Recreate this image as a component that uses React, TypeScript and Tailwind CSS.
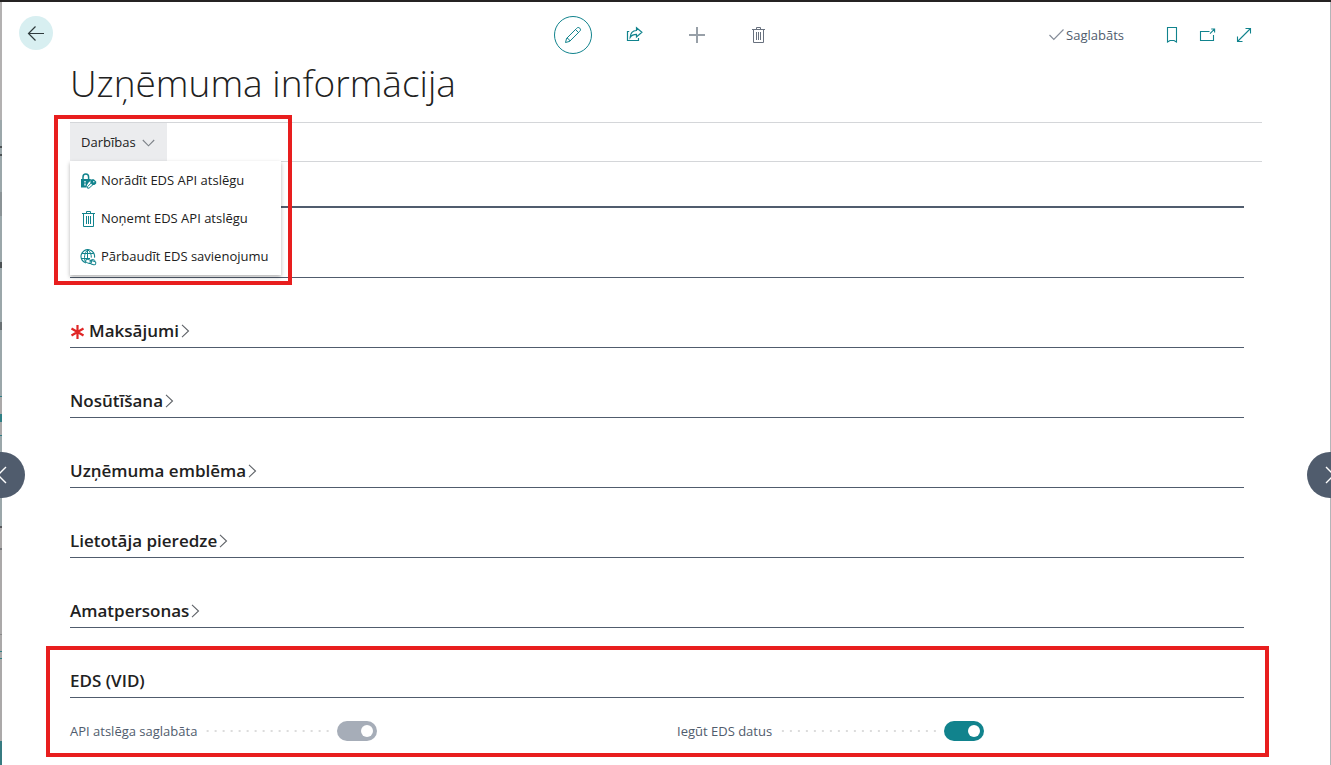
import { useState } from 'react';
import type { ReactNode } from 'react';

function BackIcon() {
  return (
    <svg width="18" height="18" viewBox="0 0 18 18" fill="none" stroke="#2f3a3c" strokeWidth="1.2">
      <path d="M17 9.5H1.5M8.5 2.5L1.5 9.5L8.5 16.5" />
    </svg>
  );
}

function PencilIcon() {
  return (
    <svg width="18" height="18" viewBox="0 0 18 18" fill="none" stroke="currentColor">
      <path d="M1.5 16.5L2.6 12.4L12.6 2.4C13.4 1.3 14.8 1.2 15.8 2.2C16.8 3.2 16.7 4.6 15.6 5.4L5.6 15.4Z" />
      <path d="M11.5 3.5L14.5 6.5M2.6 12.4C4.4 12.3 5.6 13.6 5.6 15.4" />
    </svg>
  );
}

function ShareIcon() {
  return (
    <svg width="18" height="18" viewBox="0 0 18 18" fill="none" stroke="currentColor" strokeWidth="1.2">
      <path d="M3.2 5.5H1.5V14.5H12.5V12" />
      <path d="M10.5 1.8L15.9 6.3L10.5 11V8.4C7.6 8.4 5.6 9.2 4.2 11.4C4.4 7.4 6.6 4.7 10.5 4.5Z" />
    </svg>
  );
}

function PlusIcon() {
  return (
    <svg width="18" height="18" viewBox="0 0 18 18" fill="none" stroke="#98a0a8" strokeWidth="2">
      <path d="M1 9H17M9 1V17" />
    </svg>
  );
}

function TrashIcon() {
  return (
    <svg width="16" height="16" viewBox="0 0 16 16" fill="none" stroke="currentColor">
      <path d="M1 2.5H14M5.5 2.5V0.5H9.5V2.5M2.5 2.5V15.5H12.5V2.5M5.5 5V13M7.5 5V13M9.5 5V13" />
    </svg>
  );
}

function CheckIcon() {
  return (
    <svg width="15" height="12" viewBox="0 0 15 12" fill="none" stroke="#858c98" strokeWidth="1.2">
      <path d="M0.5 6L4.8 10.3L14.5 0.5" />
    </svg>
  );
}

function BookmarkIcon() {
  return (
    <svg width="12" height="18" viewBox="0 0 12 18" fill="none" stroke="currentColor" strokeWidth="1.1">
      <path d="M1.5 1.5H10.5V16L8 14.5H4L1.5 16Z" />
    </svg>
  );
}

function PopOutIcon() {
  return (
    <svg width="18" height="16" viewBox="0 0 18 16" fill="none" stroke="currentColor" strokeWidth="1.1">
      <path d="M10.5 4.5H1.5V13.5H14.5V8M11 6.6L15.5 2.1M12.2 2H15.6V5.4" />
    </svg>
  );
}

function ExpandIcon() {
  return (
    <svg width="16" height="16" viewBox="0 0 16 16" fill="none" stroke="currentColor" strokeWidth="1.1">
      <path d="M1.5 14.5L14.5 1.5M9.5 1.5H14.5V6.5M1.5 9.5V14.5H6.5" />
    </svg>
  );
}

function LockKeyIcon() {
  return (
    <svg width="17" height="16" viewBox="0 0 17 16" fill="none" stroke="currentColor">
      <path d="M3 6V4C3 2.2 4.1 1.1 5.8 1.1S8.6 2.2 8.6 4V6" strokeWidth="1.5" />
      <path d="M1 6H10.8V7.4L8.4 9.8L6.8 12.6V14.6H1Z" fill="currentColor" stroke="none" />
      <path d="M5 8V9.6M5 10.4V12.4" stroke="#fff" strokeWidth="1.3" />
      <path d="M11.6 6.2H13.8L16.2 8.4V10.4L14.4 12H12.4L10.4 9.8V7.6Z" fill="currentColor" stroke="none" />
      <path d="M11.4 9.8L7.6 13.6V15.2H9L13 11.6" />
      <circle cx="13.8" cy="8.8" r="0.7" fill="#fff" stroke="none" />
    </svg>
  );
}

function GlobeLinkIcon() {
  return (
    <svg width="17" height="17" viewBox="0 0 17 17" fill="none" stroke="currentColor">
      <path d="M6 14A6.8 6.8 0 1 1 14.5 8.6" strokeWidth="1.1" />
      <path d="M5.4 13C3.8 9.6 4.2 3.6 7.8 0.8C10.4 2.8 11.4 5.6 11.3 8.6M7.5 1V9.5M1.8 4.5H13.6M1 9.5H10" />
      <rect x="5.6" y="10.7" width="6" height="3.4" rx="1.7" transform="rotate(18 8.6 12.4)" />
      <rect x="9.9" y="12" width="6" height="3.4" rx="1.7" transform="rotate(18 12.9 13.7)" />
      <path d="M10.8 11.2C12 10.2 14 10.4 15.4 12" />
    </svg>
  );
}

function ChevronRight() {
  return (
    <svg width="9" height="14" viewBox="0 0 9 14" fill="none" stroke="#5f6368" strokeWidth="1.1">
      <path d="M1 0.8L7.5 7L1 13.2" />
    </svg>
  );
}

function ChevronDown() {
  return (
    <svg width="13" height="8" viewBox="0 0 13 8" fill="none" stroke="#7d8288" strokeWidth="1.1">
      <path d="M0.8 1L6.5 6.8L12.2 1" />
    </svg>
  );
}

function RequiredMark() {
  return (
    <svg className="mr-0.5" width="15" height="15" viewBox="0 0 15 15" fill="none" stroke="#e02626" strokeWidth="2.2">
      <path d="M7.5 1V15M1.5 4.5L13.5 11.5M13.5 4.5L1.5 11.5" />
    </svg>
  );
}

function IconButton({ label, children, className }: { label: string; children: ReactNode; className: string }) {
  return (
    <button type="button" aria-label={label} className={`flex items-center justify-center ${className}`}>
      {children}
    </button>
  );
}

function Section({ title, required = false }: { title: string; required?: boolean }) {
  return (
    <h2 className="flex h-[70px] items-end border-b border-[#505c6d] pb-1">
      <button type="button" className="flex items-center gap-0.5 text-[17px] leading-6 font-semibold">
        {required && <RequiredMark />}
        {title}
        <ChevronRight />
      </button>
    </h2>
  );
}

function ToggleField({ id, label, disabled = false }: { id: string; label: string; disabled?: boolean }) {
  const [on, setOn] = useState(true);
  return (
    <div className="flex h-5 items-center">
      <div className="flex w-[267px] items-center pr-2">
        <label htmlFor={id} className="text-[13px] leading-5 whitespace-nowrap text-[#505c6d]">
          {label}
        </label>
        <span className="ml-2 h-0.5 flex-1 bg-[linear-gradient(to_left,#dcdcdc_2px,transparent_2px)] bg-[length:8px_2px] bg-right" />
      </div>
      <input
        id={id}
        type="checkbox"
        role="switch"
        checked={on}
        disabled={disabled}
        onChange={() => setOn(!on)}
        className="flex h-5 w-10 appearance-none items-center rounded-full bg-[#505c6d] px-1 before:size-3 before:rounded-full before:bg-white checked:justify-end checked:bg-[#11838d] disabled:bg-[#a6adb8]"
      />
    </div>
  );
}

const backdrop = [
  'h-[118px] bg-[#b3b1b1]',
  'h-[26px] bg-[#9ba7aa]',
  'h-[2px] bg-[#4c5254]',
  'h-[6px] bg-[#9ba7aa]',
  'h-[2px] bg-[#4c5254]',
  'h-[36px] bg-[#9ba7aa]',
  'h-[24px] bg-[#8b9396]',
  'h-[46px] bg-[#9ba7aa]',
  'h-[6px] bg-[#4c5254]',
  'h-[54px] bg-[#9ba7aa]',
  'h-[8px] bg-[#6a7174]',
  'h-[66px] bg-[#9ba7aa]',
  'h-[1px] bg-[#2f7f85]',
  'h-[17px] bg-[#aba9a9]',
  'h-[8px] bg-[#2f7f85]',
  'h-[13px] bg-[#aba9a9]',
  'h-[1px] bg-[#2f7f85]',
  'h-[90px] bg-[#9ba7aa]',
  'h-[2px] bg-[#58595d]',
  'h-[20px] bg-[#aba9a9]',
  'h-[2px] bg-[#77787b]',
  'h-[84px] bg-[#aba9a9]',
  'h-[1px] bg-[#8a8a8a]',
  'h-[16px] bg-[#aba9a9]',
  'h-[1px] bg-[#2f7f85]',
  'h-[6px] bg-[#aba9a9]',
  'h-[1px] bg-[#2f7f85]',
  'h-[82px] bg-[#aba9a9]',
  'grow bg-[#377b81]',
];

const actions = [
  { label: 'Norādīt EDS API atslēgu', icon: <LockKeyIcon /> },
  { label: 'Noņemt EDS API atslēgu', icon: <TrashIcon /> },
  { label: 'Pārbaudīt EDS savienojumu', icon: <GlobeLinkIcon /> },
];

export default function App() {
  const [open, setOpen] = useState(true);
  return (
    <div className="relative flex min-h-screen flex-col overflow-hidden border-t-2 border-[#252323] bg-white font-['Open_Sans','Noto_Sans',sans-serif] text-[#212121]">
      <div className="flex grow">
        <div className="flex w-0.5 shrink-0 flex-col" aria-hidden="true">
          {backdrop.map((segment, i) => (
            <div key={i} className={segment} />
          ))}
        </div>

        <div className="min-w-0 grow border-r border-[#b3b5b8]">
          <header className="grid grid-cols-[1fr_auto_1fr] items-start px-[17px] pt-3.5">
            <IconButton label="Atpakaļ" className="size-[34px] rounded-full bg-[#d8eff1]">
              <BackIcon />
            </IconButton>
            <div className="flex items-center gap-6 text-[#11838d]">
              <IconButton label="Rediģēt" className="size-[38px] rounded-full border border-[#11838d]">
                <PencilIcon />
              </IconButton>
              <IconButton label="Kopīgot" className="size-[38px]">
                <ShareIcon />
              </IconButton>
              <IconButton label="Jauns" className="size-[38px]">
                <PlusIcon />
              </IconButton>
              <IconButton label="Dzēst" className="size-[38px] text-[#68717e]">
                <TrashIcon />
              </IconButton>
            </div>
            <div className="flex h-[38px] items-center justify-end gap-3 pr-[57px] text-[#11838d]">
              <span className="mr-6 flex items-center gap-0.5 text-[13px] leading-5 text-[#505c6d]">
                <CheckIcon />
                Saglabāts
              </span>
              <IconButton label="Grāmatzīme" className="size-6">
                <BookmarkIcon />
              </IconButton>
              <IconButton label="Atvērt jaunā logā" className="size-6">
                <PopOutIcon />
              </IconButton>
              <IconButton label="Izvērst" className="size-6">
                <ExpandIcon />
              </IconButton>
            </div>
          </header>

          <main className="px-[68px]">
            <h1 className="h-[68px] text-[37px] leading-[58px] font-light whitespace-nowrap">Uzņēmuma informācija</h1>

            <div className="flex h-10 border-y border-[#d4d6d9]">
              <div className="relative">
                <button
                  type="button"
                  aria-expanded={open}
                  onClick={() => setOpen(!open)}
                  className="flex h-[38px] w-[97px] items-center gap-1.5 bg-[#ebecee] pt-0.5 pl-[11px] text-[13px]"
                >
                  Darbības
                  <ChevronDown />
                </button>
                {open && (
                  <ul className="absolute top-full left-0 z-10 w-[211px] bg-white shadow-[0_2px_4px_rgba(0,0,0,0.3)]">
                    {actions.map((action) => (
                      <li key={action.label}>
                        <button
                          type="button"
                          className="flex h-[38px] w-full items-center gap-1 pt-0.5 pl-2.5 text-[13px] whitespace-nowrap"
                        >
                          <span className="flex w-[17px] justify-center text-[#11838d]">{action.icon}</span>
                          {action.label}
                        </button>
                      </li>
                    ))}
                  </ul>
                )}
                <div className="pointer-events-none absolute -top-2 -left-4 z-20 h-[170px] w-[238px] border-4 border-[#e81e1e]" />
              </div>
            </div>

            <div className="mr-[18px]">
              <div className="h-[46px] border-b-2 border-[#505c6d]" />
              <div className="h-[70px] border-b border-[#505c6d]" />
              <Section title="Maksājumi" required />
              <Section title="Nosūtīšana" />
              <Section title="Uzņēmuma emblēma" />
              <Section title="Lietotāja pieredze" />
              <Section title="Amatpersonas" />

              <section className="relative pb-6">
                <h2 className="flex h-[70px] items-end border-b border-[#505c6d] pb-1 text-[17px] leading-6 font-semibold">
                  EDS (VID)
                </h2>
                <div className="grid grid-cols-2 gap-10 pt-[23px]">
                  <ToggleField id="api-key-saved" label="API atslēga saglabāta" disabled />
                  <ToggleField id="get-eds-data" label="Iegūt EDS datus" />
                </div>
                <div className="pointer-events-none absolute top-[18px] -right-[25px] bottom-2 -left-6 border-4 border-[#e81e1e]" />
              </section>
            </div>
          </main>
        </div>
      </div>

      <button
        type="button"
        aria-label="Iepriekšējais"
        className="absolute top-[450px] -left-[21px] flex size-[46px] items-center justify-center rounded-full bg-[#505c6d]"
      >
        <svg width="10" height="18" viewBox="0 0 10 18" fill="none" stroke="#fff" strokeWidth="1.4">
          <path d="M9 1L1 9L9 17" />
        </svg>
      </button>
      <button
        type="button"
        aria-label="Nākamais"
        className="absolute top-[450px] -right-[22px] flex size-[46px] items-center justify-center rounded-full bg-[#505c6d]"
      >
        <svg width="10" height="18" viewBox="0 0 10 18" fill="none" stroke="#fff" strokeWidth="1.4">
          <path d="M1 1L9 9L1 17" />
        </svg>
      </button>
    </div>
  );
}
